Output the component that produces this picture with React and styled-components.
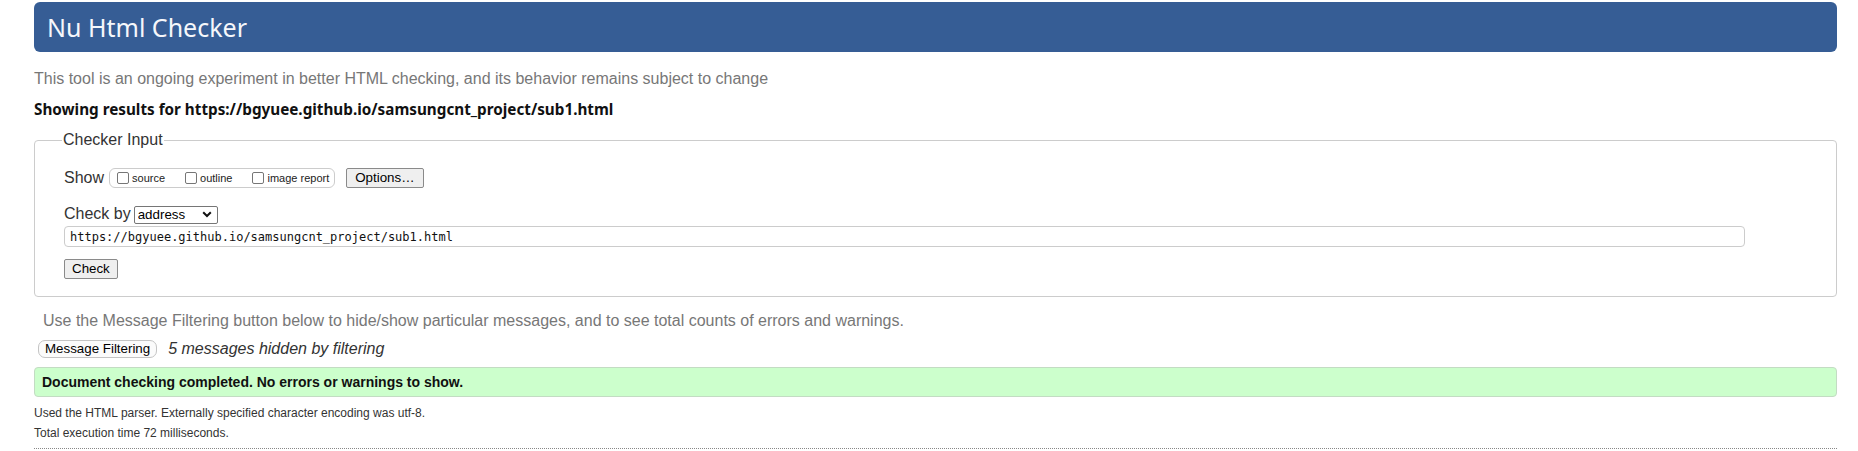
import React from 'react';
import styled, { createGlobalStyle } from 'styled-components';

const GlobalStyle = createGlobalStyle`
  html, body { margin: 0; padding: 0; background: #fff; }
  body { font-family: "Liberation Sans", Arial, sans-serif; color: #222; }
  * { box-sizing: border-box; }
`;

const Page = styled.div`
  padding: 2px 21px 0 34px;
`;

const Header = styled.h1`
  margin: 0;
  height: 50px;
  background: #365d95;
  border-radius: 6px;
  color: #f5f7fb;
  font-family: "Noto Sans", sans-serif;
  font-weight: 400;
  font-size: 25px;
  line-height: 50px;
  padding-left: 13px;
`;

const Intro = styled.p`
  margin: 17px 0 0;
  font-size: 16px;
  line-height: 20px;
  color: #777;
`;

const Showing = styled.p`
  margin: 10px 0 0;
  font-family: "Noto Sans", sans-serif;
  font-weight: 700;
  font-size: 15.25px;
  line-height: 20px;
  color: #111;
`;

const Fieldset = styled.fieldset`
  margin: 11px 0 0;
  border: 1px solid #ccc;
  border-radius: 4px;
  padding: 18px 29px 17px 29px;
  min-width: 0;
`;

const Legend = styled.legend`
  padding: 0 1px;
  margin-left: -2px;
  font-size: 16px;
  line-height: 20px;
  color: #333;
`;

const Row = styled.div`
  display: flex;
  align-items: center;
  height: 20px;
  margin-top: ${p => p.$mt || 0}px;
  padding-left: ${p => p.$pl || 0}px;
`;

const RowLabel = styled.span`
  font-size: 16px;
  color: #333;
  margin-right: ${p => p.$gap}px;
`;

const CheckGroup = styled.div`
  display: flex;
  align-items: center;
  gap: 20px;
  height: 20px;
  border: 1px solid #ccc;
  border-radius: 6px;
  padding: 0 5px 0 7px;
`;

const CheckOption = styled.label`
  display: flex;
  align-items: center;
  font-size: 11px;
  color: #222;
`;

const Checkbox = styled.input.attrs({ type: 'checkbox' })`
  appearance: none;
  width: 12px;
  height: 12px;
  margin: 0 3px 0 0;
  border: 1px solid #767676;
  border-radius: 2px;
  background: #fff;
`;

const Button = styled.button`
  height: ${p => p.$h || 20}px;
  margin-left: ${p => p.$ml || 0}px;
  padding: 0 ${p => p.$px || 8}px;
  font-family: "Liberation Sans", Arial, sans-serif;
  font-size: 13.33px;
  color: #000;
  background: ${p => (p.$soft ? '#fbfbfb' : '#efefef')};
  border: 1px solid ${p => (p.$soft ? '#c4c4c4' : '#8a8a8a')};
  border-radius: ${p => p.$r || 2}px;
  line-height: 1;
`;

const SelectWrap = styled.div`
  position: relative;
  width: 84px;
  height: 18px;
  margin-left: 3px;
`;

const Select = styled.select`
  appearance: none;
  width: 100%;
  height: 18px;
  padding: 0 0 0 3px;
  border: 1px solid #767676;
  border-radius: 2px;
  background: #fff;
  font-family: "Liberation Sans", Arial, sans-serif;
  font-size: 13.33px;
  color: #000;
`;

const Chevron = styled.svg`
  position: absolute;
  right: 6px;
  top: 6px;
  pointer-events: none;
`;

const UrlInput = styled.input`
  display: block;
  width: calc(100% - 62px);
  height: 21px;
  margin-top: 2px;
  padding: 0 5px;
  border: 1px solid #ccc;
  border-radius: 4px;
  font-family: "DejaVu Sans Mono", monospace;
  font-size: 12px;
  color: #111;
  background: #fff;
`;

const Hint = styled.p`
  margin: 14px 0 0 9px;
  font-size: 16px;
  line-height: 20px;
  color: #777;
`;

const FilterNote = styled.em`
  margin-left: 11px;
  font-size: 16px;
  color: #333;
`;

const Success = styled.div`
  margin-top: 8px;
  height: 30px;
  border: 1px solid #c3dcc3;
  border-radius: 4px;
  background: #ccffcc;
  padding: 0 7px;
  font-size: 14px;
  font-weight: 700;
  line-height: 28px;
  color: #111;
`;

const Details = styled.div`
  margin-top: 6px;
  font-size: 12px;
  line-height: 20px;
  color: #333;
`;

const Rule = styled.hr`
  margin: 5px 0 0;
  border: 0;
  border-top: 1px dotted #888;
  height: 0;
`;

export default function App() {
  const url = 'https://bgyuee.github.io/samsungcnt_project/sub1.html';
  return (
    <>
      <GlobalStyle />
      <Page>
        <Header>Nu Html Checker</Header>
        <Intro>This tool is an ongoing experiment in better HTML checking, and its behavior remains subject to change</Intro>
        <Showing>Showing results for {url}</Showing>
        <Fieldset>
          <Legend>Checker Input</Legend>
          <Row>
            <RowLabel $gap={5}>Show</RowLabel>
            <CheckGroup>
              <CheckOption><Checkbox />source</CheckOption>
              <CheckOption><Checkbox />outline</CheckOption>
              <CheckOption><Checkbox />image report</CheckOption>
            </CheckGroup>
            <Button $ml={11} $px={8}>Options…</Button>
          </Row>
          <Row $mt={16}>
            <RowLabel $gap={0}>Check by</RowLabel>
            <SelectWrap>
              <Select defaultValue="address">
                <option value="address">address</option>
                <option value="upload">file upload</option>
                <option value="input">text input</option>
              </Select>
              <Chevron width="10" height="7" viewBox="0 0 10 7">
                <path d="M1.2 1.2 L5 5 L8.8 1.2" fill="none" stroke="#111" strokeWidth="2" />
              </Chevron>
            </SelectWrap>
          </Row>
          <UrlInput defaultValue={url} />
          <Row $mt={12}>
            <Button $px={7}>Check</Button>
          </Row>
        </Fieldset>
        <Hint>Use the Message Filtering button below to hide/show particular messages, and to see total counts of errors and warnings.</Hint>
        <Row $mt={8} $pl={4}>
          <Button $soft $h={18} $px={6} $r={7}>Message Filtering</Button>
          <FilterNote>5 messages hidden by filtering</FilterNote>
        </Row>
        <Success>Document checking completed. No errors or warnings to show.</Success>
        <Details>
          <div>Used the HTML parser. Externally specified character encoding was utf-8.</div>
          <div>Total execution time 72 milliseconds.</div>
        </Details>
        <Rule />
      </Page>
    </>
  );
}
